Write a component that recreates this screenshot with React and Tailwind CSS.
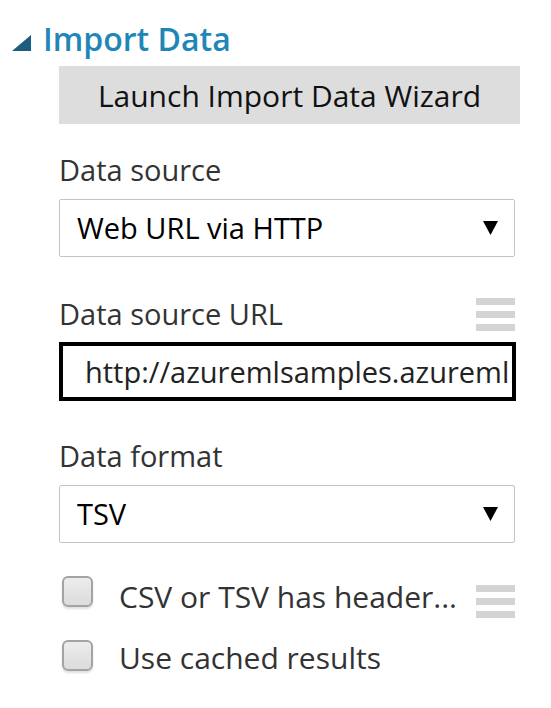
import React from 'react';

function Hamburger({ className = '' }) {
  return (
    <div className={`flex flex-col gap-[6px] w-[39px] ${className}`}>
      <div className="h-[7px] bg-[#d4d4d4]" />
      <div className="h-[7px] bg-[#d4d4d4]" />
      <div className="h-[7px] bg-[#d4d4d4]" />
    </div>
  );
}

function Select({ value }) {
  return (
    <div className="flex items-center justify-between h-[58px] w-[456px] border border-[#c4c4c4] rounded-[2px] pl-[17px] pr-[16px] bg-white">
      <span className="text-[29px] text-black">{value}</span>
      <svg width="15" height="14" viewBox="0 0 15 14">
        <polygon points="0,0 15,0 7.5,14" fill="#000" />
      </svg>
    </div>
  );
}

function Checkbox() {
  return (
    <div className="w-[31px] h-[31px] shrink-0 rounded-[6px] border-2 border-[#a3a3a3] bg-gradient-to-b from-[#ececec] to-[#dcdcdc] shadow-[0_2px_2px_rgba(0,0,0,0.12)]" />
  );
}

export default function App() {
  return (
    <div
      className="w-[551px] h-[708px] bg-white text-[#333]"
      style={{ fontFamily: '"Open Sans", "Noto Sans", sans-serif' }}
    >
      <div className="flex items-center h-[40px] pt-[19px] box-content">
        <svg width="19" height="16" viewBox="0 0 19 16" className="ml-[12px] mt-[8px]">
          <polygon points="0,16 19,16 19,0" fill="#1c5c7c" />
        </svg>
        <span className="ml-[12px] text-[32px] font-semibold text-[#1f87b7] leading-none">Import Data</span>
      </div>

      <div className="ml-[59px]">
        <div className="mt-[7px] flex items-center justify-center h-[58px] w-[461px] bg-[#dddddd] text-[30px] text-[#111]">
          Launch Import Data Wizard
        </div>

        <div className="mt-[31px] h-[30px] leading-[30px] text-[29px]">Data source</div>
        <div className="mt-[14px]">
          <Select value="Web URL via HTTP" />
        </div>

        <div className="mt-[41px] flex items-center justify-between h-[32px] w-[456px]">
          <span className="text-[29px] leading-[30px]">Data source URL</span>
          <Hamburger />
        </div>
        <div className="mt-[12px] h-[59px] w-[457px] border-4 border-black flex items-center pl-[22px] pr-[4px]">
          <input
            readOnly
            value="http://azuremlsamples.azureml.net/templatedata/Text - Input.tsv"
            className="w-full min-w-0 bg-transparent outline-none text-[29px] text-[#222]"
          />
        </div>

        <div className="mt-[40px] h-[30px] leading-[30px] text-[29px]">Data format</div>
        <div className="mt-[14px]">
          <Select value="TSV" />
        </div>

        <div className="mt-[33px] flex items-start w-[456px]">
          <div className="ml-[3px]">
            <Checkbox />
          </div>
          <span className="ml-[26px] mt-[6px] text-[30px] leading-[30px]">CSV or TSV has header...</span>
          <Hamburger className="ml-auto mt-[9px]" />
        </div>

        <div className="mt-[22px] flex items-start">
          <div className="ml-[3px]">
            <Checkbox />
          </div>
          <span className="ml-[26px] mt-[3px] text-[30px] leading-[30px]">Use cached results</span>
        </div>
      </div>
    </div>
  );
}
